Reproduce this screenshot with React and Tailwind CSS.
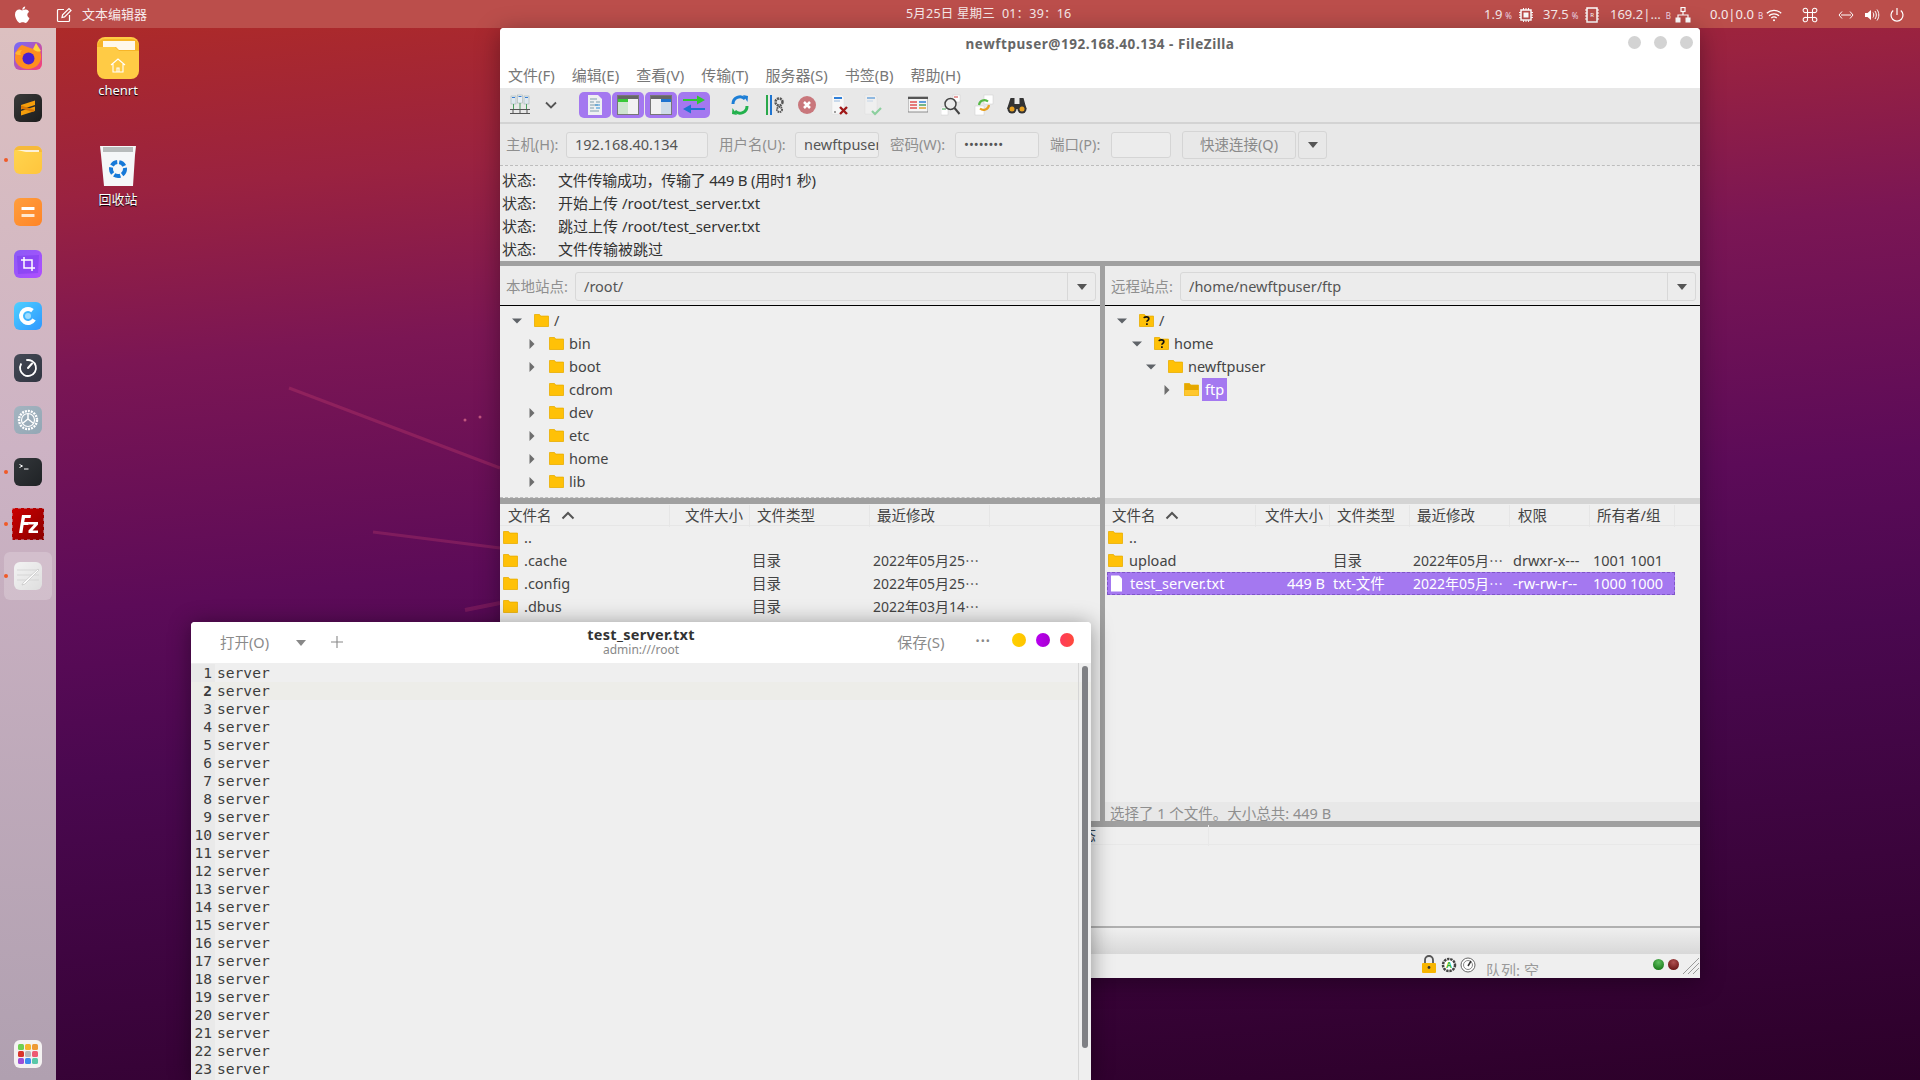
import React from "react";

const Folder = ({ open, q }) => (
  <svg width="15" height="15" viewBox="0 0 15 15" className="shrink-0">
    <path d="M.5 1.5h5l1.2 1.6h7.8v10.4H.5z" fill={open ? "#e6a800" : "#ffc107"} stroke="#e8ad00" strokeWidth=".8" />
    {open && <path d="M.5 8h14v5.500H.5z" fill="#ffc72e" />}
    {q && <path d="M5 5.200c.3-1.800 4.800-1.800 4.800.5 0 1.700-1.900 1.500-1.900 3.100M7.900 10.300v1.700" fill="none" stroke="#111" strokeWidth="1.700" />}
  </svg>
);

const Arrow = ({ down }) => (
  <svg width="10" height="10" viewBox="0 0 10 10" className="shrink-0">
    {down ? <path d="M0 2.500h10L5 7.500z" fill="#5f6368" /> : <path d="M2.500 0v10L7.500 5z" fill="#6e6e6e" />}
  </svg>
);

const localTree = [
  ["/", true, "pl-[12px]"], ["bin", false, "pl-[27px]"], ["boot", false, "pl-[27px]"], ["cdrom", null, "pl-[27px]"],
  ["dev", false, "pl-[27px]"], ["etc", false, "pl-[27px]"], ["home", false, "pl-[27px]"], ["lib", false, "pl-[27px]"], ["lib32", false, "pl-[27px]"],
];

const TreeRow = ({ name, down, pad, q, sel }) => (
  <div className={`flex h-[23px] items-center ${pad}`}>
    {down === null ? <span className="w-[10px] shrink-0" /> : <Arrow down={down} />}
    <span className="ml-3 flex"><Folder q={q} open={sel} /></span>
    {sel ? (
      <span className="ml-[3px] flex h-[23px] items-center bg-[#a478f0] px-[3px] text-white">{name}</span>
    ) : (
      <span className="ml-[5px]">{name}</span>
    )}
  </div>
);

const Sort = () => (
  <svg width="14" height="9" viewBox="0 0 14 9" className="ml-[9px] inline-block align-[1px]"><path d="M1.500 7.500 7 2l5.500 5.500" fill="none" stroke="#555" strokeWidth="2" /></svg>
);

const DocIcon = () => (
  <svg width="15" height="17" viewBox="0 0 15 17" className="shrink-0"><path d="M2 .5h8l3 3v13H2z" fill="#fff" /></svg>
);

const Input = ({ className, children }) => (
  <div className={`flex h-[26px] items-center overflow-hidden rounded-[3px] border border-[#d5d5d5] bg-[#ececec] pl-2 text-[#555] ${className}`}>{children}</div>
);

const SiteBar = ({ label, path, inputW }) => (
  <div className="flex h-10 shrink-0 items-center border-b border-black bg-[#ececec] pl-[6px] pr-1 pt-[2px]">
    <span className="w-[69px] shrink-0 text-[#8f8f8f]">{label}</span>
    <div className={`flex h-[29px] items-center rounded-[3px] border border-[#d8d8d8] bg-[#ececec] text-[#555] ${inputW}`}>
      <span className="flex-1 pl-2">{path}</span>
      <span className="flex h-full w-7 items-center justify-center border-l border-[#d8d8d8]"><svg width="10" height="6" viewBox="0 0 10 6"><path d="M0 0h10L5 6z" fill="#555" /></svg></span>
    </div>
  </div>
);

const Grad = ({ id, a, b }) => (
  <defs><linearGradient id={id} x1="0" y1="0" x2="1" y2="1"><stop offset="0" stopColor={a} /><stop offset="1" stopColor={b} /></linearGradient></defs>
);

const Tile = ({ id, a, b, children }) => (
  <svg width="28" height="28" viewBox="0 0 28 28"><Grad id={id} a={a} b={b} /><rect width="28" height="28" rx="6" fill={`url(#${id})`} />{children}</svg>
);

const DockItem = ({ dot, active, children }) => (
  <div className="relative flex h-[52px] w-14 items-center justify-center">
    {active && <span className="absolute left-1 top-[2px] h-12 w-12 rounded-md bg-white/20" />}
    {dot && <span className="absolute left-[4px] top-[24px] h-1 w-1 rounded-full bg-[#f05a28]" />}
    <span className="relative flex">{children}</span>
  </div>
);

const Dock = () => (
  <div className="flex h-full w-14 shrink-0 flex-col items-center bg-[linear-gradient(180deg,#dcc0c0_0%,#cdb3c4_40%,#b0a0b0_100%)] pt-[2px]">
    <DockItem>
      <Tile id="ff" a="#6f6cff" b="#ff3d6e">
        <path d="M8 3c-3 2-7 6-7 13 0 6 6 11 13 11s13-5 13-12c0-4-1-7-3-9-1 2-3 2-5 1-3-1-8-3-11-4z" fill="#ff8f1f" />
        <path d="M1 11c2-2 4-3 7-3-2 2-2 4-1 5-3 0-5 0-6-2z" fill="#ffb52e" />
        <circle cx="14.500" cy="16.500" r="6" fill="#4a1fd0" />
        <path d="M19 7l3-6 5 8c-2 1-5 1-8-2z" fill="#ffd43b" />
      </Tile>
    </DockItem>
    <DockItem>
      <Tile id="sub" a="#3a3a3a" b="#1c1c1c"><path d="M7 11l14-4.500v4.500L7 15.500zM7 17l14-4.500V17L7 21.500z" fill="#f59e0b" /><path d="M7 11.500l14 4.500-2 2-12-3.500z" fill="#d97706" /></Tile>
    </DockItem>
    <DockItem dot>
      <Tile id="fo" a="#ffd54f" b="#ffc53d"><path d="M0 6a6 6 0 0 1 6-6h16a6 6 0 0 1 6 6H12L10 4H0z" fill="#f6b93b" /><path d="M3 4h22v2H12z" fill="#fff" opacity=".8" /></Tile>
    </DockItem>
    <DockItem>
      <Tile id="or" a="#ff9e3d" b="#ff8427"><rect x="7.500" y="9" width="13" height="3" rx=".5" fill="#fff" /><rect x="7.500" y="16" width="13" height="3" rx=".5" fill="#ffe8d0" /></Tile>
    </DockItem>
    <DockItem>
      <Tile id="cr" a="#8a5cf6" b="#b14dff"><path d="M3 6l22-1-1 18-20 1z" fill="#7c3aed" opacity=".5" /><path d="M10 7v11h11M7 10h11v11" fill="none" stroke="#fff" strokeWidth="1.500" /></Tile>
    </DockItem>
    <DockItem>
      <Tile id="cl" a="#4fd0ff" b="#2e97ff"><circle cx="14" cy="14" r="7" fill="none" stroke="#fff" strokeWidth="4" strokeDasharray="34 10" transform="rotate(30 14 14)" /><circle cx="14" cy="14" r="3" fill="#9ddcff" /></Tile>
    </DockItem>
    <DockItem>
      <Tile id="dl" a="#454a57" b="#303440"><circle cx="14" cy="14" r="8" fill="none" stroke="#fff" strokeWidth="1.800" strokeDasharray="38 6" transform="rotate(-60 14 14)" /><path d="M14 14l4-4.500" stroke="#fff" strokeWidth="2" strokeLinecap="round" /></Tile>
    </DockItem>
    <DockItem>
      <Tile id="st" a="#a4b4c0" b="#93a7b5"><circle cx="14" cy="14" r="9" fill="none" stroke="#fff" strokeWidth="2.400" strokeDasharray="2 1" /><circle cx="14" cy="14" r="6.500" fill="none" stroke="#fff" strokeWidth="1.200" /><path d="M14 8v5l-5 4M14 13l5 4" fill="none" stroke="#fff" strokeWidth="1.500" /></Tile>
    </DockItem>
    <DockItem dot>
      <Tile id="tm" a="#33373b" b="#1f2225"><path d="M5.500 6.500l3 1.500-3 1.500" fill="none" stroke="#fff" strokeWidth="1" /><path d="M10 11h4.500" stroke="#fff" strokeWidth="1" /></Tile>
    </DockItem>
    <DockItem dot>
      <svg width="32" height="32" viewBox="0 0 32 32">
        <Grad id="fz" a="#cc0000" b="#8a0000" />
        <rect width="32" height="32" fill="url(#fz)" />
        <path d="M0 0h32v32H0z" fill="none" stroke="#c9b3c4" strokeWidth="1" strokeDasharray="3 3" />
        <path d="M7 25l3-18h9l-.5 3h-5.500l-.8 4h5l-.6 3h-5l-1.200 8z" fill="#fff" />
        <path d="M17 14h9v2.500l-5.500 6H26V25H16.500v-2.500l5.500-6h-5z" fill="#fff" />
      </svg>
    </DockItem>
    <DockItem dot active>
      <Tile id="ed" a="#f3f3f3" b="#dedede"><path d="M3 8h22M3 13h22M3 18h22" stroke="#cfcfcf" strokeWidth=".7" /><path d="M9 21L24 7l1 1L11 22l-3 1z" fill="#fff" stroke="#bcbcbc" strokeWidth=".6" /></Tile>
    </DockItem>
    <div className="flex-1" />
    <div className="mb-[12px] flex">
      <svg width="28" height="28" viewBox="0 0 28 28">
        <rect width="28" height="28" rx="6" fill="#f4f2f2" />
        {[["#6fcf52", 4, 4], ["#f5b52e", 11, 4], ["#ee9a35", 18, 4], ["#d9342b", 4, 11], ["#b9b9b9", 11, 11], ["#ee5a72", 18, 11], ["#9b4fd6", 4, 18], ["#3b8df0", 11, 18], ["#5ac8a8", 18, 18]].map(([c, x, y]) => (
          <rect key={c} x={x} y={y} width="6" height="6" rx="1.500" fill={c} />
        ))}
      </svg>
    </div>
  </div>
);

const TopIcon = ({ children, w = 16 }) => (
  <svg width={w} height="16" viewBox="0 0 16 16" fill="none" stroke="#fff" className="shrink-0">{children}</svg>
);

const Unit = ({ children }) => <span className="text-[8px] text-[#f0d8e8]">{children}</span>;

const TopBar = () => (
  <div className="relative flex h-7 shrink-0 items-center bg-[#bb4e4b] pt-px text-[13px] text-[#f7eaea]">
    <svg width="16" height="18" viewBox="0 0 16 18" className="ml-[14px]" fill="#fff">
      <path d="M11.200.5c.1 1.700-1.300 3.300-2.900 3.200C8.100 2.100 9.700.6 11.200.5zM14.800 6.200c-2.200 1.400-1.800 4.700.7 5.700-.8 2.200-2.300 4.900-4 5-1 0-1.400-.7-2.800-.7s-1.800.7-2.800.7c-1.900 0-4.900-4.700-4.900-8.400 0-3.300 2.200-5 4.200-5 1.200 0 2.200.8 2.900.8s1.900-1 3.300-.9c.6 0 2.300.2 3.400 1.800z" />
    </svg>
    <svg width="16" height="16" viewBox="0 0 16 16" fill="none" stroke="#fff" strokeWidth="1.200" className="ml-[26px]">
      <path d="M8 2.500H2.500a1 1 0 0 0-1 1v10a1 1 0 0 0 1 1h10a1 1 0 0 0 1-1V8" />
      <path d="M6 10.500l.6-2.600L13 1.500l2 2-6.400 6.400z" />
    </svg>
    <span className="ml-[10px]">文本编辑器</span>
    <span className="absolute left-[906px] text-[12.500px] tracking-[.2px]">5月25日 星期三 &nbsp;01：39：16</span>
    <div className="flex-1" />
    <span className="flex w-[34px] items-baseline gap-[3px] text-[13px]">1.9 <Unit>%</Unit></span>
    <TopIcon><rect x="3" y="3" width="10" height="10" strokeWidth="1.500" /><rect x="5.500" y="5.500" width="5" height="5" fill="#fff" stroke="none" /><path d="M1 5.500h2M1 8h2M1 10.500h2M13 5.500h2M13 8h2M13 10.500h2M5.500 1v2M8 1v2M10.500 1v2M5.500 13v2M8 13v2M10.500 13v2" /></TopIcon>
    <span className="ml-[9px] flex w-[41px] items-baseline gap-[3px] text-[13px]">37.5 <Unit>%</Unit></span>
    <TopIcon><rect x="3" y="1" width="10" height="14" strokeWidth="1.500" /><path d="M1 3h2M1 6h2M1 9h2M1 12h2M13 3h2M13 6h2M13 9h2M13 12h2" /><text x="8" y="10" fontSize="6" textAnchor="middle" fill="#fff" stroke="none">R</text></TopIcon>
    <span className="ml-[10px] flex w-[65px] items-baseline gap-[5px] whitespace-nowrap text-[13px]">169.2|… <Unit>B</Unit></span>
    <TopIcon><rect x="6" y=".5" width="4" height="4" strokeWidth="1.200" /><rect x="1" y="11" width="4" height="4" fill="#fff" /><rect x="11" y="11" width="4" height="4" fill="#fff" /><path d="M8 4.500V8M3 11V8h10v3" strokeWidth="1.200" /></TopIcon>
    <span className="ml-[19px] flex w-[56px] items-baseline gap-[4px] whitespace-nowrap text-[13px]">0.0|0.0 <Unit>B</Unit></span>
    <TopIcon><path d="M.8 6.200c4-3.800 10.400-3.800 14.400 0M3 8.700c2.800-2.500 7.200-2.500 10 0M5.300 11c1.500-1.200 3.900-1.200 5.400 0" strokeWidth="1.300" /><circle cx="8" cy="13.300" r="1" fill="#fff" stroke="none" /></TopIcon>
    <span className="ml-[20px] flex"><TopIcon><path d="M5.500 5.500h5v5h-5zM5.500 5.500H4A2.200 2.200 0 1 1 5.500 3.800zM10.500 5.500H12A2.200 2.200 0 1 0 10.500 3.800zM5.500 10.500H4A2.200 2.200 0 1 0 5.500 12.200zM10.500 10.500H12A2.200 2.200 0 1 1 10.500 12.200z" strokeWidth="1.100" /></TopIcon></span>
    <span className="ml-[20px] flex"><TopIcon><path d="M4 4.500L1 8l3 3.500M12 4.500L15 8l-3 3.500M3 8h10" strokeWidth="1" /></TopIcon></span>
    <span className="ml-[10px] flex"><TopIcon><path d="M1 6h2.500L7 3v10L3.500 10H1z" fill="#fff" stroke="none" /><path d="M9 5.500c1 1.500 1 3.500 0 5M11 4c1.800 2.500 1.800 5.500 0 8M13 2.500c2.400 3.400 2.400 7.600 0 11" strokeWidth="1" /></TopIcon></span>
    <span className="ml-[9px] mr-[15px] flex"><TopIcon><path d="M4.200 3.500a6 6 0 1 0 7.600 0M8 1v7" strokeWidth="1.200" /></TopIcon></span>
  </div>
);

const FileRow = ({ children, sel, className = "" }) => (
  <div className={`flex h-[23px] items-center whitespace-nowrap ${sel ? "border border-dashed border-[#7f55c8] bg-[#a478f0] text-white" : ""} ${className}`}>{children}</div>
);

const Cell = ({ className = "", children }) => <span className={`block shrink-0 overflow-hidden ${className}`}>{children}</span>;

const Tb = ({ className = "", children }) => (
  <svg width="20" height="22" viewBox="0 0 20 22" className={`shrink-0 ${className}`}>{children}</svg>
);

const Purple = ({ children }) => (
  <span className="flex h-[26px] w-[32px] items-center justify-center rounded-[5px] bg-[#a478f0]">{children}</span>
);

const Toolbar = () => (
  <div className="flex h-9 shrink-0 items-center border-b-2 border-[#d3d3d3] bg-[#e8e8e8] pl-[10px]">
    <Tb><rect x="1" y="2" width="5" height="8" fill="#dfe8ef" stroke="#9aa" strokeWidth=".5" /><rect x="7.500" y="1" width="5" height="8" fill="#e8eef3" stroke="#9aa" strokeWidth=".5" /><rect x="14" y="2" width="5" height="8" fill="#dfe8ef" stroke="#9aa" strokeWidth=".5" /><path d="M2 3.500h3M8.500 2.500h3M15 3.500h3" stroke="#3a7fd5" /><path d="M3.500 10v5M10 9v6M16.500 10v5" stroke="#4aa060" /><path d="M0 15.500h20M0 19.500h20M3 15.500v4M10 15.500v4M17 15.500v4" stroke="#555" /></Tb>
    <svg width="12" height="8" viewBox="0 0 12 8" className="ml-[15px]"><path d="M1 1.500l5 5 5-5" fill="none" stroke="#555" strokeWidth="1.800" /></svg>
    <div className="ml-[22px] flex gap-px">
      <Purple><svg width="16" height="22" viewBox="0 0 16 22"><path d="M1 1h10l4 4v16H1z" fill="#eef0f2" /><path d="M3 5h7M3 8h4M9 8h4M3 11h8M3 14h4M3 17h9" stroke="#7f9cab" /><path d="M8 11h5M9 14h4" stroke="#2f8fd8" /></svg></Purple>
      <Purple><svg width="22" height="20" viewBox="0 0 22 20"><rect x=".5" y=".5" width="21" height="19" fill="#f2f2f2" stroke="#777" /><rect x="1" y="1" width="20" height="3" fill="#666" /><rect x="1" y="4" width="10" height="3" fill="#38c838" /><rect x="1" y="7" width="10" height="12" fill="#cfe5cf" /></svg></Purple>
      <Purple><svg width="22" height="20" viewBox="0 0 22 20"><rect x=".5" y=".5" width="21" height="19" fill="#f2f2f2" stroke="#777" /><rect x="1" y="1" width="20" height="3" fill="#666" /><rect x="11" y="4" width="10" height="3" fill="#1f74d0" /><rect x="11" y="7" width="10" height="12" fill="#cfdce8" /></svg></Purple>
      <Purple><svg width="24" height="22" viewBox="0 0 24 22"><path d="M1 5h14V1.500L23 6l-8 4.500V7H1z" fill="#2fc82f" /><path d="M23 14H9v-3.500L1 15l8 4.500V16h14z" fill="#1f74d0" /></svg></Purple>
    </div>
    <Tb className="ml-[20px]"><path d="M3 10a7 7 0 0 1 12-5" fill="none" stroke="#1c7ed6" strokeWidth="3" /><path d="M13 1l5 1-.5 6z" fill="#1c7ed6" /><path d="M17 12a7 7 0 0 1-12 5" fill="none" stroke="#22b14c" strokeWidth="3" /><path d="M7 21l-5-1 .5-6z" fill="#22b14c" /></Tb>
    <Tb className="ml-[14px]"><path d="M3 1v20" stroke="#2aa84a" strokeWidth="2" /><path d="M7 1v20" stroke="#1f74d0" strokeWidth="2" /><circle cx="15" cy="8" r="3.500" fill="none" stroke="#555" strokeWidth="2.500" strokeDasharray="2 .8" /><circle cx="15.500" cy="15.500" r="2.500" fill="none" stroke="#555" strokeWidth="2" strokeDasharray="1.500 .6" /></Tb>
    <Tb className="ml-[13px]"><circle cx="10" cy="11" r="9" fill="#c9777c" /><path d="M7 8l6 6M13 8l-6 6" stroke="#fff" strokeWidth="2.500" /></Tb>
    <Tb className="ml-[12px]"><path d="M3 1h10l2 2v17H3z" fill="#f7f7f7" stroke="#ddd" strokeWidth=".5" /><path d="M5 4h8" stroke="#2f7fd8" strokeWidth="2" /><path d="M5 7h6" stroke="#9bbbe0" /><path d="M11 13l7 7M18 13l-7 7" stroke="#a01818" strokeWidth="2.400" /><circle cx="6" cy="18" r=".8" fill="#333" /></Tb>
    <Tb className="ml-[13px]"><path d="M3 1h10l2 2v17H3z" fill="#efefef" stroke="#ddd" strokeWidth=".5" /><path d="M5 4h8" stroke="#8fb8e0" strokeWidth="2" /><path d="M5 7h6" stroke="#c3d5e8" /><path d="M10 17l3 3 6-6" fill="none" stroke="#8ccf9e" strokeWidth="2.200" /></Tb>
    <Tb className="ml-[26px]"><rect x="0" y="3" width="20" height="15" fill="#f5f5f5" stroke="#666" strokeWidth=".7" /><rect x="0" y="3" width="20" height="2" fill="#555" /><path d="M2 8h7M2 11h7M2 14h7" stroke="#e05050" strokeWidth="1.400" /><path d="M11 8h7" stroke="#2f7fd8" strokeWidth="1.400" /><path d="M11 11h7" stroke="#4aa060" strokeWidth="1.400" /><path d="M11 14h7" stroke="#e0a030" strokeWidth="1.400" /></Tb>
    <Tb className="ml-[13px]"><rect x="12" y="1" width="7" height="7" fill="#fff" stroke="#ccc" strokeWidth=".5" /><path d="M13 3h4" stroke="#d04040" /><rect x="0" y="13" width="7" height="8" fill="#fff" stroke="#ccc" strokeWidth=".5" /><path d="M1 15h4" stroke="#40a050" /><circle cx="9.500" cy="10" r="5.500" fill="#eee" fillOpacity=".6" stroke="#444" strokeWidth="1.500" /><path d="M13.500 14l5 6" stroke="#444" strokeWidth="2" /></Tb>
    <Tb className="ml-[13px]"><rect x="10" y="1" width="9" height="9" fill="#fff" stroke="#ccc" strokeWidth=".5" /><rect x="1" y="12" width="9" height="9" fill="#fff" stroke="#ccc" strokeWidth=".5" /><path d="M5 11a5.500 5.500 0 0 1 9-3.500" fill="none" stroke="#57b947" strokeWidth="2.200" /><path d="M15 11a5.500 5.500 0 0 1-9 3.500" fill="none" stroke="#e8a020" strokeWidth="2.200" /></Tb>
    <Tb className="ml-[13px]"><path d="M3.500 4h4v6h5V4h4l3 11H0z" fill="#333" /><circle cx="5" cy="15" r="4.500" fill="#333" /><circle cx="15" cy="15" r="4.500" fill="#333" /><circle cx="5" cy="15" r="2.500" fill="#e8a020" /><circle cx="15" cy="15" r="2.500" fill="#e8a020" /></Tb>
  </div>
);

const FileZilla = () => (
  <div className="absolute left-[444px] top-0 flex h-[950px] w-[1200px] flex-col overflow-hidden rounded-t-[4px] bg-[#efefef] text-[14.500px] text-[#444] shadow-[0_4px_24px_rgba(0,0,0,.35)]">
    <div className="relative flex h-8 shrink-0 items-center justify-center bg-white text-[13.500px] font-bold tracking-[.55px] text-[#666]">
      newftpuser@192.168.40.134 - FileZilla
      <div className="absolute right-[7px] top-[8px] flex gap-[13px]">
        <span className="h-[13px] w-[13px] rounded-full bg-[#d3d3d3]" />
        <span className="h-[13px] w-[13px] rounded-full bg-[#d3d3d3]" />
        <span className="h-[13px] w-[13px] rounded-full bg-[#d3d3d3]" />
      </div>
    </div>
    <div className="flex h-7 shrink-0 items-center gap-[17px] bg-white pl-2 pt-[3px] text-[15px] text-[#777]">
      {["文件(F)", "编辑(E)", "查看(V)", "传输(T)", "服务器(S)", "书签(B)", "帮助(H)"].map((m) => <span key={m}>{m}</span>)}
    </div>
    <Toolbar />
    <div className="flex h-[41px] shrink-0 items-center bg-[#e8e8e8] pl-[6px] text-[#8f8f8f]">
      <span className="w-[60px]">主机(H):</span>
      <Input className="w-[142px]">192.168.40.134</Input>
      <span className="ml-[11px] w-[76px]">用户名(U):</span>
      <Input className="w-[84px]">newftpuser</Input>
      <span className="ml-[11px] w-[65px]">密码(W):</span>
      <Input className="w-[84px] text-[13px] leading-none">••••••••</Input>
      <span className="ml-[11px] w-[61px]">端口(P):</span>
      <Input className="w-[60px]" />
      <span className="ml-[11px] flex h-[28px] w-[114px] items-center justify-center rounded-[3px] border border-[#d5d5d5] text-[#8a8a8a]">快速连接(Q)</span>
      <span className="ml-[2px] flex h-[28px] w-[29px] items-center justify-center rounded-[3px] border border-[#d5d5d5]"><svg width="10" height="6" viewBox="0 0 10 6"><path d="M0 0h10L5 6z" fill="#555" /></svg></span>
    </div>
    <div className="h-[96px] shrink-0 overflow-hidden border-t border-dashed border-[#bdbdbd] bg-[#ececec] pt-[3px] text-[15px] text-[#333]">
      <div className="flex h-[23px] items-center pl-[2px]"><span className="w-[56px] shrink-0">状态:</span><span className="tracking-[-.25px]">文件传输成功，传输了 449 B (用时1 秒)</span></div>
      {["开始上传 /root/test_server.txt", "跳过上传 /root/test_server.txt", "文件传输被跳过"].map((t) => (
        <div key={t} className="flex h-[23px] items-center pl-[2px]"><span className="w-[56px] shrink-0">状态:</span><span>{t}</span></div>
      ))}
    </div>
    <div className="h-[5px] shrink-0 bg-[#a0a0a0]" />
    <div className="flex h-[555px] shrink-0">
      <div className="flex w-[600px] shrink-0 flex-col">
        <SiteBar label="本地站点:" path="/root/" inputW="w-[521px]" />
        <div className="h-[192px] shrink-0 overflow-hidden border-b border-dashed border-[#bdbdbd] pt-[3px] text-[#444]">
          {localTree.map(([n, d, p]) => <TreeRow key={n} name={n} down={d} pad={p} />)}
        </div>
        <div className="h-[6px] shrink-0 bg-[#a0a0a0]" />
        <div className="flex h-[22px] shrink-0 items-center border-b border-[#e6e6e6] pt-[3px] text-[#444]">
          <Cell className="w-[170px] border-r border-[#e6e6e6] pl-[8px]">文件名<Sort /></Cell>
          <Cell className="w-[80px] border-r border-[#e6e6e6] pl-[15px]">文件大小</Cell>
          <Cell className="w-[120px] border-r border-[#e6e6e6] pl-[7px]">文件类型</Cell>
          <Cell className="w-[120px] border-r border-[#e6e6e6] pl-[7px]">最近修改</Cell>
        </div>
        {[["..", "", ""], [".cache", "目录", "2022年05月25⋯"], [".config", "目录", "2022年05月25⋯"], [".dbus", "目录", "2022年03月14⋯"]].map(([n, t, d]) => (
          <FileRow key={n}>
            <Cell className="flex w-[252px] items-center gap-[6px] pl-[3px]"><Folder />{n}</Cell>
            <Cell className="w-[121px]">{t}</Cell>
            <Cell className="text-[14px]">{d}</Cell>
          </FileRow>
        ))}
      </div>
      <div className="w-[5px] shrink-0 bg-[#a0a0a0]" />
      <div className="flex w-[595px] shrink-0 flex-col">
        <SiteBar label="远程站点:" path="/home/newftpuser/ftp" inputW="w-[516px]" />
        <div className="h-[192px] shrink-0 overflow-hidden pt-[3px]">
          <TreeRow name="/" down pad="pl-[12px]" q />
          <TreeRow name="home" down pad="pl-[27px]" q />
          <TreeRow name="newftpuser" down pad="pl-[41px]" />
          <TreeRow name="ftp" down={false} pad="pl-[57px]" sel />
        </div>
        <div className="h-[6px] shrink-0 bg-[#d4d4d4]" />
        <div className="flex h-[22px] shrink-0 items-center border-b border-[#e6e6e6] pt-[3px]">
          <Cell className="w-[151px] border-r border-[#e6e6e6] pl-[7px]">文件名<Sort /></Cell>
          <Cell className="w-[74px] border-r border-[#e6e6e6] pl-[9px]">文件大小</Cell>
          <Cell className="w-[80px] border-r border-[#e6e6e6] pl-[7px]">文件类型</Cell>
          <Cell className="w-[100px] border-r border-[#e6e6e6] pl-[7px]">最近修改</Cell>
          <Cell className="w-[80px] border-r border-[#e6e6e6] pl-[8px]">权限</Cell>
          <Cell className="w-[85px] border-r border-[#e6e6e6] pl-[7px]">所有者/组</Cell>
        </div>
        <FileRow><Cell className="flex w-[228px] items-center gap-[6px] pl-[3px]"><Folder />..</Cell></FileRow>
        <FileRow>
          <Cell className="flex w-[228px] items-center gap-[6px] pl-[3px]"><Folder />upload</Cell>
          <Cell className="w-[80px]">目录</Cell>
          <Cell className="w-[100px] text-[14px]">2022年05月⋯</Cell>
          <Cell className="w-[80px]">drwxr-x---</Cell>
          <Cell>1001 1001</Cell>
        </FileRow>
        <FileRow sel className="ml-[2px] w-[568px]">
          <Cell className="flex w-[150px] items-center gap-[6px] pl-px"><DocIcon />test_server.txt</Cell>
          <Cell className="w-[67px] text-right">449 B</Cell>
          <Cell className="ml-[8px] w-[80px]">txt-文件</Cell>
          <Cell className="w-[100px] text-[14px]">2022年05月⋯</Cell>
          <Cell className="w-[80px]">-rw-rw-r--</Cell>
          <Cell>1000 1000</Cell>
        </FileRow>
        <div className="flex-1" />
        <div className="h-[19px] shrink-0 overflow-hidden whitespace-nowrap bg-[#e8e8e8] pl-[5px] pt-px text-[#8f8f8f]">选择了 1 个文件。大小总共: 449 B</div>
      </div>
    </div>
    <div className="h-[6px] shrink-0 bg-[#a0a0a0]" />
    <div className="flex h-[18px] shrink-0 items-center border-b border-[#e8e8e8]">
      <span className="w-[709px] border-r border-[#e8e8e8] pl-[567px] text-[#345]">状态</span>
    </div>
    <div className="h-[83px] shrink-0 border-b-2 border-[#b0b0b0]" />
    <div className="h-[26px] shrink-0 bg-[linear-gradient(180deg,#efefef_0%,#d8d8d8_100%)]" />
    <div className="flex h-[22px] shrink-0 items-start overflow-hidden pl-[921px] text-[#9a9a9a]">
      <svg width="16" height="18" viewBox="0 0 16 18" className="mt-[1px] shrink-0"><path d="M4 8V5a4 4 0 0 1 8 0v3" fill="none" stroke="#555" strokeWidth="1.800" /><rect x="1" y="8" width="14" height="10" rx="1" fill="#f7b500" /><circle cx="8" cy="12.500" r="1.400" fill="#333" /></svg>
      <svg width="16" height="16" viewBox="0 0 16 16" className="ml-[4px] mt-[3px] shrink-0"><circle cx="8" cy="8" r="6" fill="#fff" stroke="#444" strokeWidth="2.500" strokeDasharray="2.400 .8" /><text x="8" y="11" fontSize="8" fontWeight="bold" textAnchor="middle" fill="#2cb52c">A</text></svg>
      <svg width="16" height="16" viewBox="0 0 16 16" className="ml-[3px] mt-[3px] shrink-0"><circle cx="8" cy="8" r="7" fill="#fff" stroke="#666" /><circle cx="8" cy="8" r="4.500" fill="none" stroke="#888" /><path d="M8 9l3-5" stroke="#333" strokeWidth="1.500" /></svg>
      <span className="ml-[10px] mt-[5px] w-[167px] shrink-0 text-[15px]">队列: 空</span>
      <span className="mt-[5px] h-[11px] w-[11px] shrink-0 rounded-full bg-[radial-gradient(circle_at_50%_30%,#5fbf5f,#0a6a0a)]" />
      <span className="ml-1 mt-[5px] h-[11px] w-[11px] shrink-0 rounded-full bg-[radial-gradient(circle_at_50%_30%,#b05050,#5a0808)]" />
      <svg width="18" height="18" viewBox="0 0 18 18" className="ml-[3px] mt-[3px] shrink-0"><path d="M1 17L17 1M6 17L17 6M11 17l6-6" stroke="#999" strokeWidth="1" /></svg>
    </div>
  </div>
);

const lines = Array.from({ length: 24 }, (_, i) => i + 1);

const Editor = () => (
  <div className="absolute bottom-0 left-[135px] flex h-[458px] w-[900px] flex-col overflow-hidden rounded-t-[4px] bg-white shadow-[0_2px_22px_rgba(0,0,0,.4)]">
    <div className="relative flex h-[41px] shrink-0 items-center bg-white text-[14.500px] text-[#8a8a8a]">
      <span className="ml-[29px] w-[76px]">打开(O)</span>
      <svg width="10" height="6" viewBox="0 0 10 6"><path d="M0 0h10L5 6z" fill="#888" /></svg>
      <svg width="14" height="14" viewBox="0 0 14 14" className="ml-[24px] mb-px"><path d="M7 1v12M1 7h12" stroke="#888" strokeWidth="1.100" /></svg>
      <div className="flex-1" />
      <span className="text-[15px]">保存(S)</span>
      <span className="ml-[31px] mb-[3px] text-[11px] tracking-[1px] text-[#888]">•••</span>
      <span className="ml-[21px] mb-[5px] h-[14px] w-[14px] rounded-full bg-[linear-gradient(90deg,#ffd000,#ffc400)]" />
      <span className="ml-[10px] mb-[5px] h-[14px] w-[14px] rounded-full bg-[linear-gradient(90deg,#b800f0,#a800d0)]" />
      <span className="ml-[10px] mb-[5px] mr-[17px] h-[14px] w-[14px] rounded-full bg-[linear-gradient(90deg,#ff3b5c,#ff4a3a)]" />
      <div className="absolute left-0 right-0 top-[5px] flex flex-col items-center leading-none">
        <span className="text-[14.500px] font-bold tracking-[.3px] text-[#333]">test_server.txt</span>
        <span className="mt-[2px] text-[12px] text-[#888]">admin:///root</span>
      </div>
    </div>
    <div className="relative min-h-0 flex-1 overflow-hidden bg-[#efefef] pt-px font-['DejaVu_Sans_Mono',monospace] text-[14.600px] text-[#3c3c3c]">
      {lines.map((n) => (
        <div key={n} className={`flex h-[18px] items-center leading-none ${n === 2 ? "bg-[#edede9]" : ""}`}>
          <span className={`h-[18px] w-6 shrink-0 pr-[3px] text-right leading-[18px] ${n === 2 ? "font-bold" : "bg-[#e9e9e9]"}`}>{n}</span>
          <span className="ml-[2px]">server</span>
        </div>
      ))}
      <div className="absolute bottom-0 right-[12px] top-0 w-px bg-[#d6d6d6]" />
      <div className="absolute right-[3px] top-[3px] h-[382px] w-[6px] rounded-full bg-[#7f8084]" />
    </div>
  </div>
);

const DesktopIcons = () => (
  <>
    <div className="absolute left-[27px] top-[9px] flex w-[70px] flex-col items-center text-[13px] text-white [text-shadow:0_1px_1px_#000]">
      <svg width="42" height="42" viewBox="0 0 42 42">
        <rect width="42" height="42" rx="8" fill="#ffcb45" />
        <path d="M0 10a8 8 0 0 1 8-8h26a8 8 0 0 1 8 6v6H22l-4-4H0z" fill="#f7b528" />
        <path d="M6 4h32v9H22l-3-3H6z" fill="#fff8ea" />
        <path d="M14 28l7-6 7 6M16 27v8h10v-8M20 35v-4h2v4" fill="none" stroke="#fff" strokeWidth="1.100" />
      </svg>
      <span className="mt-[2px]">chenrt</span>
    </div>
    <div className="absolute left-[27px] top-[118px] flex w-[70px] flex-col items-center text-[13px] text-white [text-shadow:0_1px_1px_#000]">
      <svg width="36" height="40" viewBox="0 0 36 40">
        <path d="M0 0h36l-1 9-2 31H4L1 9z" fill="#f5f7f8" />
        <rect x="3" y="1" width="30" height="5" fill="#b8bcbc" />
        <circle cx="18" cy="23" r="7" fill="none" stroke="#1679d8" strokeWidth="4" strokeDasharray="6.500 2" />
      </svg>
      <span className="mt-[4px]">回收站</span>
    </div>
  </>
);

export default function App() {
  return (
    <div className="relative flex h-[1080px] w-[1920px] flex-col overflow-hidden font-['Noto_Sans','Noto_Sans_CJK_SC',sans-serif]">
      <TopBar />
      <div className="flex min-h-0 flex-1">
        <Dock />
        <div className="relative flex-1 bg-[linear-gradient(175deg,#ad2a29_0%,#9a2240_14%,#7b1654_28%,#5c0b58_48%,#4a084f_62%,#2c0029_100%)]">
          <svg width="1864" height="1052" className="absolute inset-0" fill="none">
            <path d="M233 360L444 440" stroke="#b8386a" strokeOpacity=".4" strokeWidth="3" />
            <path d="M317 504L444 520" stroke="#b8386a" strokeOpacity=".35" strokeWidth="3" />
            <path d="M409 582L444 575" stroke="#b8386a" strokeOpacity=".3" strokeWidth="4" />
            <circle cx="409" cy="392" r="1.500" fill="#c0567e" /><circle cx="424" cy="389" r="1.500" fill="#c0567e" />
          </svg>
          <DesktopIcons />
          <FileZilla />
          <Editor />
        </div>
      </div>
    </div>
  );
}
